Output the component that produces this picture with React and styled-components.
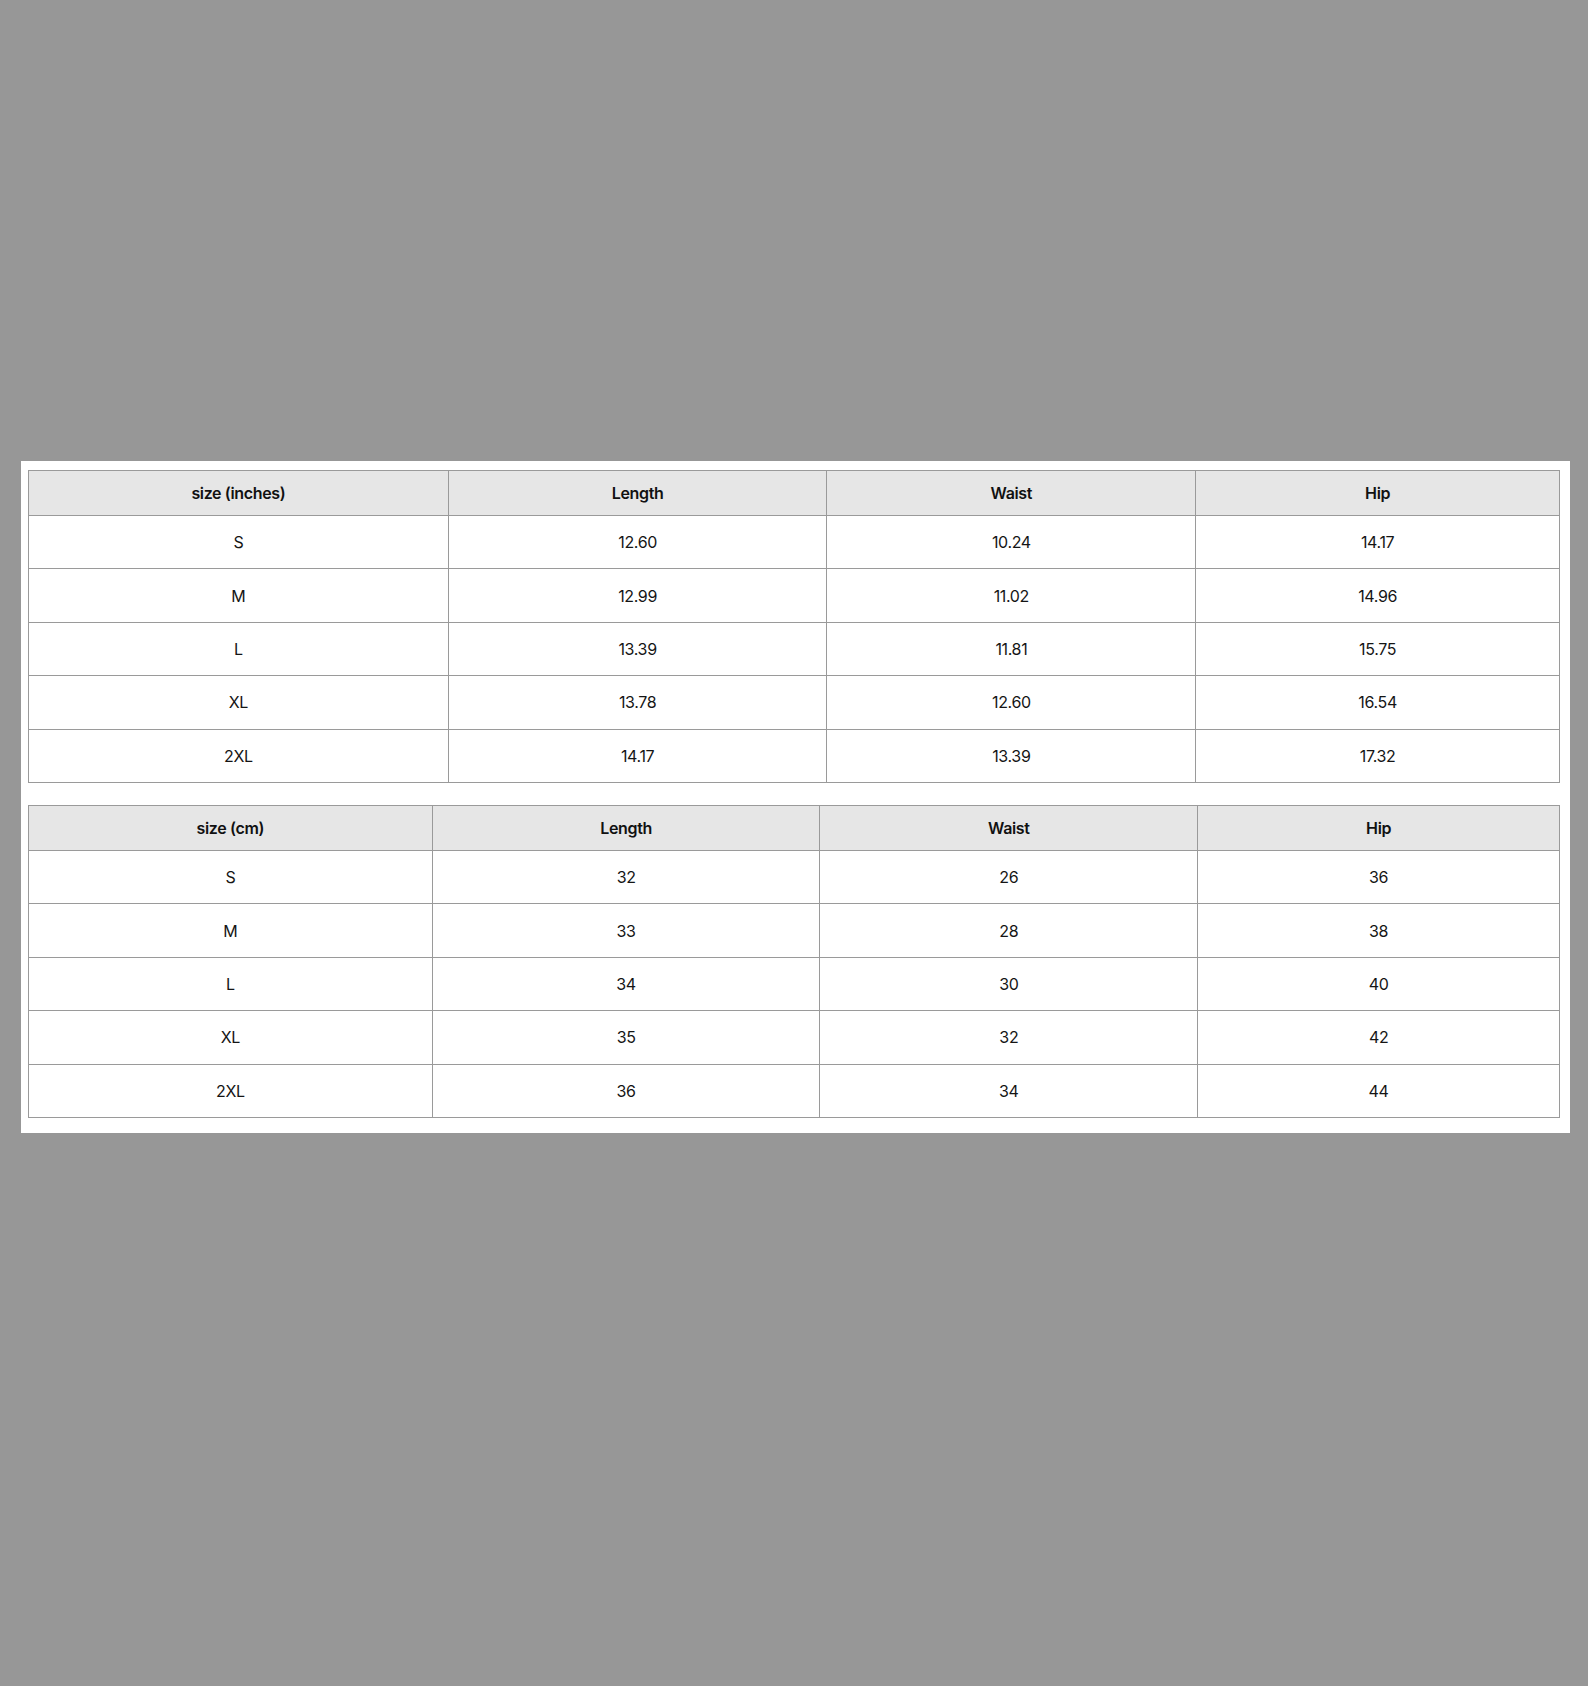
import React from "react";
import styled, { createGlobalStyle } from "styled-components";

const Global = createGlobalStyle`
  html, body {
    margin: 0;
    padding: 0;
    background: #979797;
    min-height: 1686px;
  }
  body {
    font-family: Inter, "Liberation Sans", Arial, sans-serif;
    color: #1a1a1a;
  }
`;

const Page = styled.div`
  padding: 461px 18px 0 21px;
`;

const Panel = styled.div`
  background: #ffffff;
  padding: 9px 10px 15px 7px;
  display: flex;
  flex-direction: column;
  gap: 22px;
`;

const Table = styled.table`
  width: 100%;
  border-collapse: collapse;
  table-layout: fixed;
  border: 1px solid #9a9a9a;
`;

const HeadCell = styled.th`
  background: #e6e6e6;
  height: 44px;
  padding: 0;
  border: 1px solid #9a9a9a;
  font-size: 16px;
  font-weight: 600;
  letter-spacing: -0.35px;
  text-align: center;
  vertical-align: middle;
  color: #111111;
`;

const Cell = styled.td`
  height: 52.4px;
  padding: 0;
  border: 1px solid #9a9a9a;
  font-size: 16px;
  font-weight: 400;
  letter-spacing: -0.35px;
  text-align: center;
  vertical-align: middle;
  color: #151515;
`;

const tables = [
  {
    title: "size (inches)",
    widths: [420, 379, 369, 364],
    rows: [
      ["S", "12.60", "10.24", "14.17"],
      ["M", "12.99", "11.02", "14.96"],
      ["L", "13.39", "11.81", "15.75"],
      ["XL", "13.78", "12.60", "16.54"],
      ["2XL", "14.17", "13.39", "17.32"],
    ],
  },
  {
    title: "size (cm)",
    widths: [404, 388, 378, 362],
    rows: [
      ["S", "32", "26", "36"],
      ["M", "33", "28", "38"],
      ["L", "34", "30", "40"],
      ["XL", "35", "32", "42"],
      ["2XL", "36", "34", "44"],
    ],
  },
];

function SizeTable({ title, widths, rows }) {
  const total = widths.reduce((a, b) => a + b, 0);
  return (
    <Table>
      <colgroup>
        {widths.map((w, i) => (
          <col key={i} style={{ width: `${(w / total) * 100}%` }} />
        ))}
      </colgroup>
      <thead>
        <tr>
          {[title, "Length", "Waist", "Hip"].map((h) => (
            <HeadCell key={h}>{h}</HeadCell>
          ))}
        </tr>
      </thead>
      <tbody>
        {rows.map((r) => (
          <tr key={r[0]}>
            {r.map((c, i) => (
              <Cell key={i}>{c}</Cell>
            ))}
          </tr>
        ))}
      </tbody>
    </Table>
  );
}

export default function App() {
  return (
    <>
      <Global />
      <Page>
        <Panel>
          {tables.map((t) => (
            <SizeTable key={t.title} {...t} />
          ))}
        </Panel>
      </Page>
    </>
  );
}
